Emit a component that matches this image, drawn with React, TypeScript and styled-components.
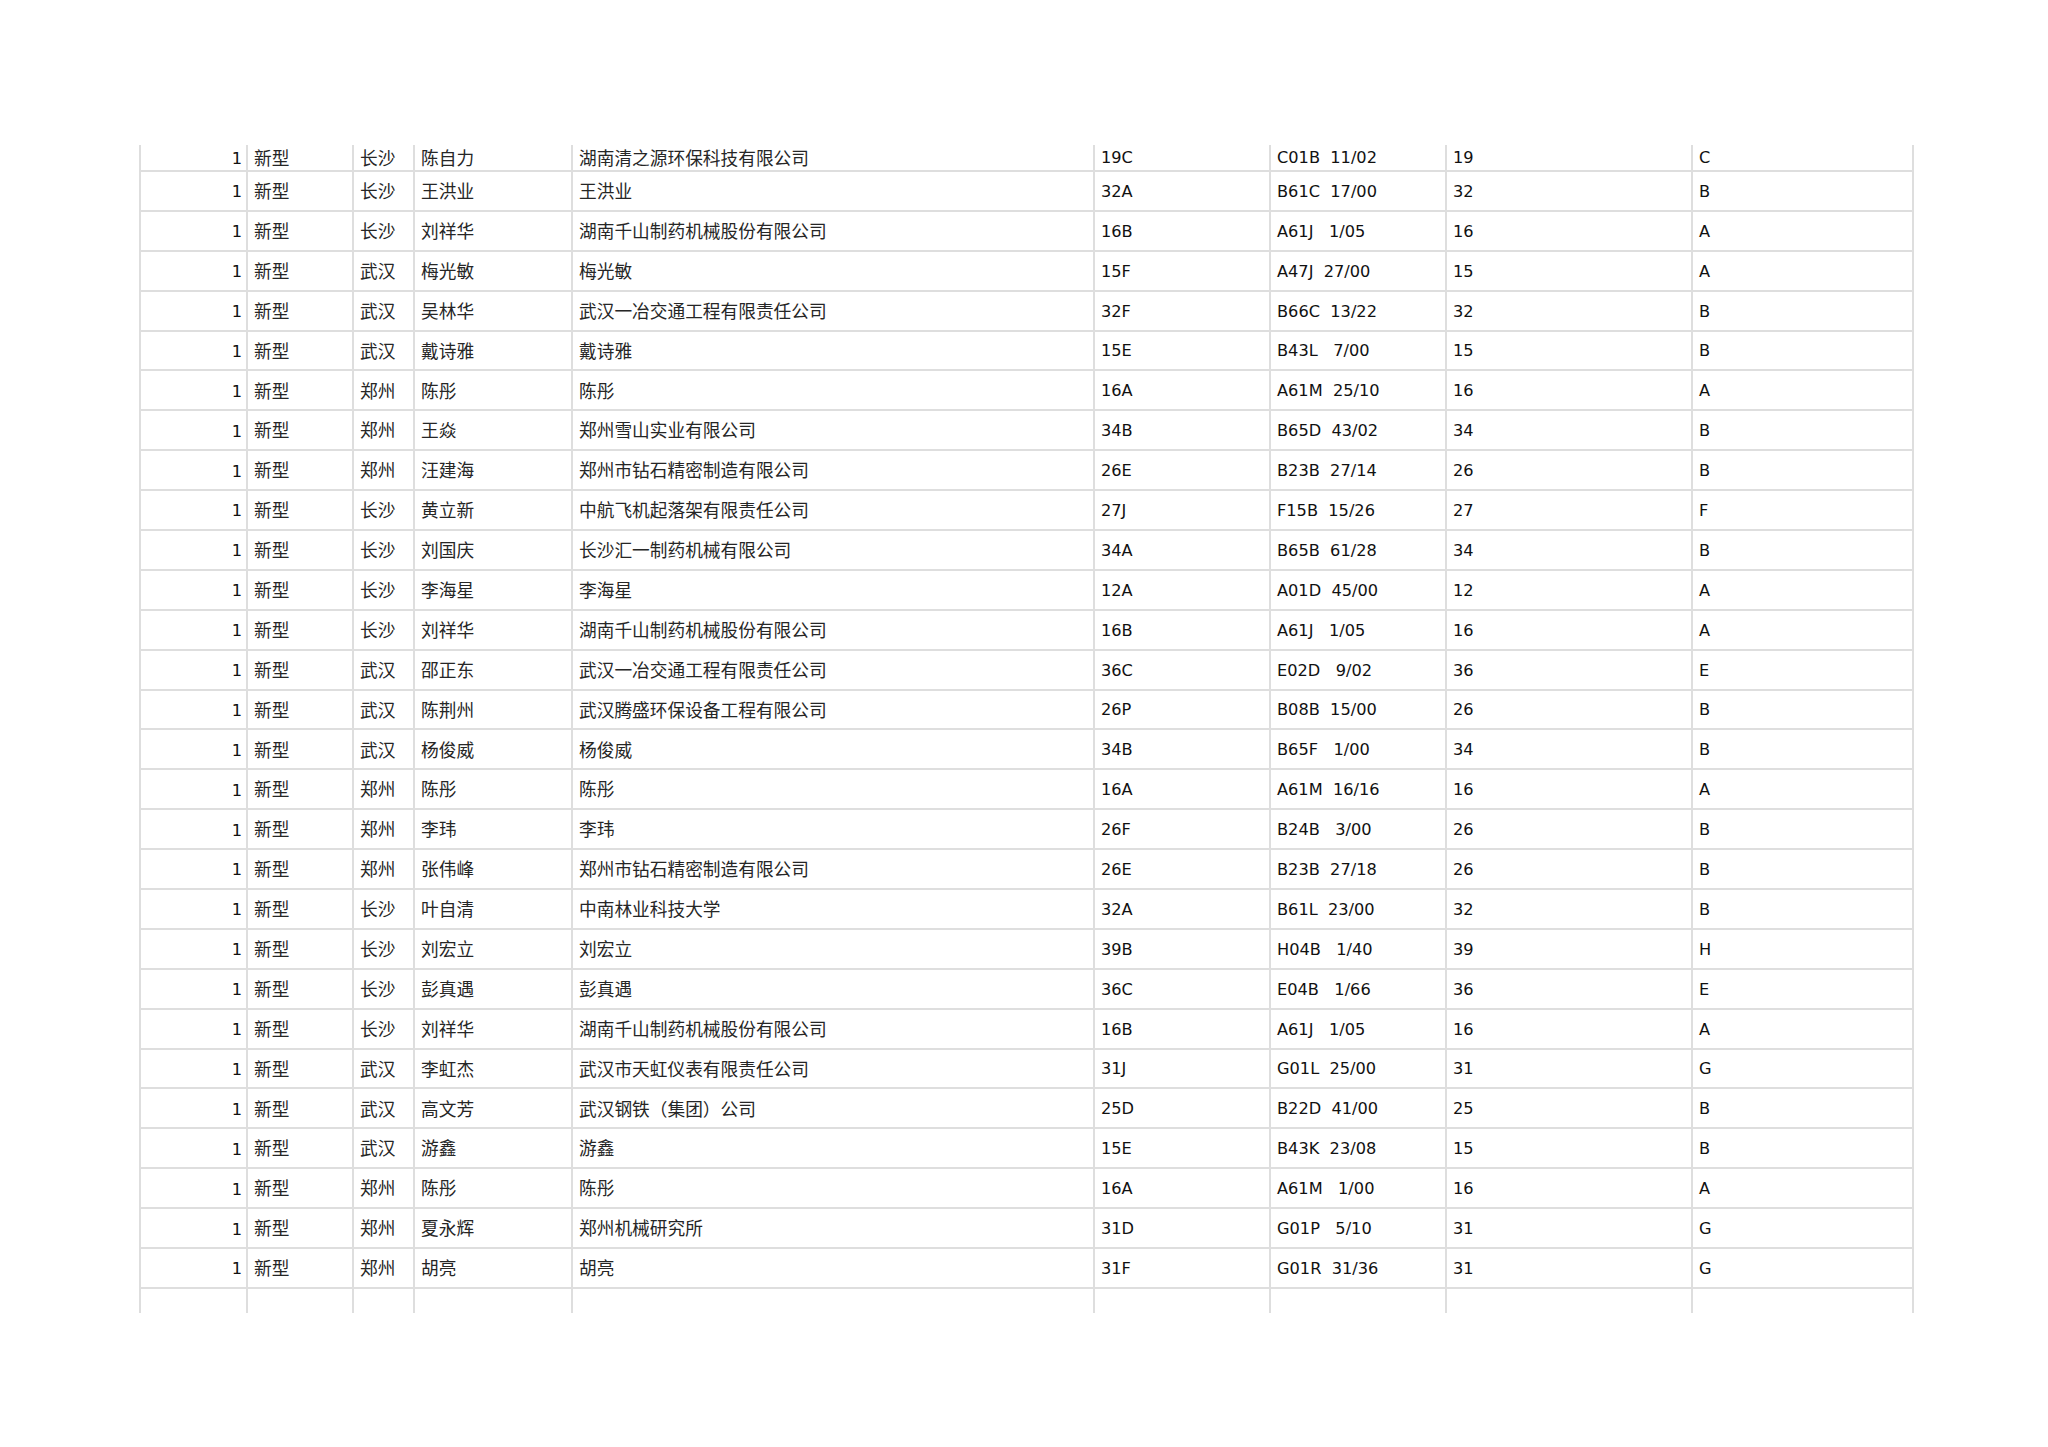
import React from 'react';
import styled, { createGlobalStyle } from 'styled-components';

const GlobalStyle = createGlobalStyle`
  html, body {
    margin: 0;
    padding: 0;
    background: #ffffff;
  }
  body {
    color: #111111;
    font-family: "DejaVu Sans", "Noto Sans CJK SC", sans-serif;
  }
`;

const Page = styled.div`
  padding: 145px 0 0 139px;
  width: 2048px;
  height: 1447px;
  box-sizing: border-box;
`;

const Sheet = styled.div`
  width: 1775px;
  display: flex;
  flex-direction: column;
`;

const Row = styled.div<{ h: number; last?: boolean }>`
  display: grid;
  grid-template-columns: 107px 106px 61px 158px 522px 176px 176px 246px 223px;
  height: ${({ h }) => h}px;
  box-sizing: border-box;
  border-bottom: ${({ last }) => (last ? 'none' : '2px solid #dedede')};
`;

const Cell = styled.div<{ cjk?: boolean; right?: boolean; end?: boolean }>`
  display: flex;
  align-items: center;
  justify-content: ${({ right }) => (right ? 'flex-end' : 'flex-start')};
  box-sizing: border-box;
  border-left: 2px solid #dedede;
  border-right: ${({ end }) => (end ? '2px solid #dedede' : 'none')};
  padding: ${({ right, cjk }) =>
    right ? '3px 4px 0 0' : cjk ? '0 0 0 6px' : '2px 0 0 6px'};
  font-family: ${({ cjk }) =>
    cjk ? '"Noto Sans CJK SC", sans-serif' : '"DejaVu Sans", sans-serif'};
  font-size: ${({ cjk }) => (cjk ? '17.7px' : '16.2px')};
  color: ${({ cjk }) => (cjk ? '#262626' : '#111111')};
  white-space: pre;
  overflow: hidden;
  line-height: 1;
`;

type Entry = [string, string, string, string, string, string, string, string];

const rows: Entry[] = [
  ['长沙', '陈自力', '湖南清之源环保科技有限公司', '19C', 'C01B  11/02', '19', 'C'],
  ['长沙', '王洪业', '王洪业', '32A', 'B61C  17/00', '32', 'B'],
  ['长沙', '刘祥华', '湖南千山制药机械股份有限公司', '16B', 'A61J   1/05', '16', 'A'],
  ['武汉', '梅光敏', '梅光敏', '15F', 'A47J  27/00', '15', 'A'],
  ['武汉', '吴林华', '武汉一冶交通工程有限责任公司', '32F', 'B66C  13/22', '32', 'B'],
  ['武汉', '戴诗雅', '戴诗雅', '15E', 'B43L   7/00', '15', 'B'],
  ['郑州', '陈彤', '陈彤', '16A', 'A61M  25/10', '16', 'A'],
  ['郑州', '王焱', '郑州雪山实业有限公司', '34B', 'B65D  43/02', '34', 'B'],
  ['郑州', '汪建海', '郑州市钻石精密制造有限公司', '26E', 'B23B  27/14', '26', 'B'],
  ['长沙', '黄立新', '中航飞机起落架有限责任公司', '27J', 'F15B  15/26', '27', 'F'],
  ['长沙', '刘国庆', '长沙汇一制药机械有限公司', '34A', 'B65B  61/28', '34', 'B'],
  ['长沙', '李海星', '李海星', '12A', 'A01D  45/00', '12', 'A'],
  ['长沙', '刘祥华', '湖南千山制药机械股份有限公司', '16B', 'A61J   1/05', '16', 'A'],
  ['武汉', '邵正东', '武汉一冶交通工程有限责任公司', '36C', 'E02D   9/02', '36', 'E'],
  ['武汉', '陈荆州', '武汉腾盛环保设备工程有限公司', '26P', 'B08B  15/00', '26', 'B'],
  ['武汉', '杨俊威', '杨俊威', '34B', 'B65F   1/00', '34', 'B'],
  ['郑州', '陈彤', '陈彤', '16A', 'A61M  16/16', '16', 'A'],
  ['郑州', '李玮', '李玮', '26F', 'B24B   3/00', '26', 'B'],
  ['郑州', '张伟峰', '郑州市钻石精密制造有限公司', '26E', 'B23B  27/18', '26', 'B'],
  ['长沙', '叶自清', '中南林业科技大学', '32A', 'B61L  23/00', '32', 'B'],
  ['长沙', '刘宏立', '刘宏立', '39B', 'H04B   1/40', '39', 'H'],
  ['长沙', '彭真遇', '彭真遇', '36C', 'E04B   1/66', '36', 'E'],
  ['长沙', '刘祥华', '湖南千山制药机械股份有限公司', '16B', 'A61J   1/05', '16', 'A'],
  ['武汉', '李虹杰', '武汉市天虹仪表有限责任公司', '31J', 'G01L  25/00', '31', 'G'],
  ['武汉', '高文芳', '武汉钢铁（集团）公司', '25D', 'B22D  41/00', '25', 'B'],
  ['武汉', '游鑫', '游鑫', '15E', 'B43K  23/08', '15', 'B'],
  ['郑州', '陈彤', '陈彤', '16A', 'A61M   1/00', '16', 'A'],
  ['郑州', '夏永辉', '郑州机械研究所', '31D', 'G01P   5/10', '31', 'G'],
  ['郑州', '胡亮', '胡亮', '31F', 'G01R  31/36', '31', 'G'],
].map((r) => ['1', '新型', ...r] as unknown as Entry);

const cjkCols = [false, true, true, true, true, false, false, false, false];

const App = () => (
  <>
    <GlobalStyle />
    <Page>
      <Sheet>
        {rows.map((r, i) => (
          <Row key={i} h={i === 0 ? 27 : 39.9}>
            {(r as unknown as string[]).map((v, j) => (
              <Cell key={j} cjk={cjkCols[j]} right={j === 0} end={j === 8}>
                {v}
              </Cell>
            ))}
          </Row>
        ))}
        <Row h={24} last>
          {cjkCols.map((c, j) => (
            <Cell key={j} cjk={c} end={j === 8} />
          ))}
        </Row>
      </Sheet>
    </Page>
  </>
);

export default App;
